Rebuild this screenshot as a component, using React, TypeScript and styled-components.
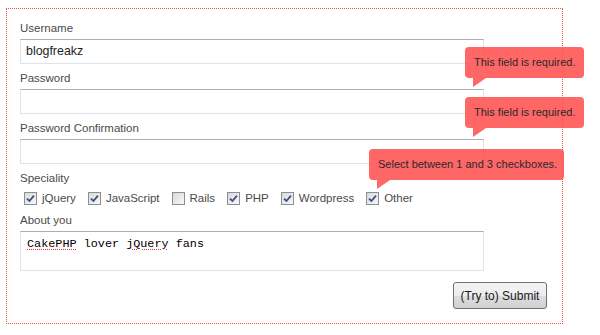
import React from "react"
import styled, { createGlobalStyle } from "styled-components"

const GlobalStyle = createGlobalStyle`
  html, body {
    margin: 0;
    padding: 0;
    background: #ffffff;
  }
  body {
    font-family: "Liberation Sans", Arial, sans-serif;
  }
`

const Page = styled.div`
  width: 600px;
  height: 335px;
  padding: 8px 0 0 6px;
  box-sizing: border-box;
`

const Form = styled.form`
  position: relative;
  width: 557px;
  box-sizing: border-box;
  border: 1px dotted #e8553f;
  padding: 11px 15px 14px 13px;
  display: flex;
  flex-direction: column;
`

const Field = styled.div<{ gap?: number }>`
  display: flex;
  flex-direction: column;
  margin-bottom: ${({ gap }) => (gap ?? 6)}px;
`

const Label = styled.label`
  display: block;
  font-size: 11.5px;
  line-height: 16px;
  color: #4a4a4a;
  margin-bottom: 3px;
`

const TextInput = styled.div`
  width: 464px;
  height: 25px;
  box-sizing: border-box;
  border: 1px solid #dde3ea;
  border-top-color: #aeaeae;
  padding: 0 5px;
  font-size: 12.4px;
  line-height: 23px;
  color: #1e1e1e;
`

const TextArea = styled(TextInput)`
  height: 40px;
  padding: 5px 6px;
  font-family: "Liberation Mono", "Courier New", monospace;
  font-size: 11.8px;
  line-height: 14px;
  color: #000;
`

const Misspelled = styled.span`
  text-decoration: underline dotted #e03030;
  text-underline-offset: 2px;
`

const CheckRow = styled.div`
  display: flex;
  align-items: center;
  height: 18px;
  padding-left: 4px;
`

const CheckItem = styled.span`
  display: flex;
  align-items: center;
  margin-right: 12px;
  font-size: 11.5px;
  color: #4a4a4a;
`

const Box = styled.span`
  width: 13px;
  height: 13px;
  box-sizing: border-box;
  border: 1px solid #8c8e90;
  background: linear-gradient(135deg, #d8d9db, #f8f8f8);
  margin-right: 5px;
  display: flex;
  align-items: center;
  justify-content: center;
`

const ButtonRow = styled.div`
  display: flex;
  justify-content: flex-end;
  margin-top: 11px;
`

const Button = styled.button`
  width: 94px;
  height: 27px;
  border: 1px solid #707070;
  border-radius: 3px;
  background: linear-gradient(#f4f4f4, #ececec 50%, #dedede 51%, #d0d0d0);
  font-family: "Liberation Sans", Arial, sans-serif;
  font-size: 12px;
  color: #1a1a1a;
  padding: 0;
`

const Tip = styled.div<{ left: number; top: number; width: number }>`
  position: absolute;
  left: ${({ left }) => left}px;
  top: ${({ top }) => top}px;
  width: ${({ width }) => width}px;
  height: 31px;
  box-sizing: border-box;
  padding-left: 9px;
  border-radius: 4px;
  background: rgba(255, 85, 85, 0.9);
  color: #2a2a2a;
  font-size: 11px;
  line-height: 31px;
  white-space: nowrap;

  &::after {
    content: "";
    position: absolute;
    left: 8px;
    top: 31px;
    border-top: 9px solid rgba(255, 85, 85, 0.9);
    border-right: 13px solid transparent;
  }
`

const Check = ({ checked, label }: { checked: boolean; label: string }) => (
  <CheckItem>
    <Box>
      {checked && (
        <svg width="9" height="9" viewBox="0 0 9 9">
          <path d="M1 4.6 L3.4 7 L8 1.6" fill="none" stroke="#3d4f86" strokeWidth="1.8" />
        </svg>
      )}
    </Box>
    {label}
  </CheckItem>
)

const specialities = [
  { label: "jQuery", checked: true },
  { label: "JavaScript", checked: true },
  { label: "Rails", checked: false },
  { label: "PHP", checked: true },
  { label: "Wordpress", checked: true },
  { label: "Other", checked: true },
]

export default function App() {
  return (
    <Page>
      <GlobalStyle />
      <Form>
        <Field>
          <Label>Username</Label>
          <TextInput>blogfreakz</TextInput>
        </Field>
        <Field>
          <Label>Password</Label>
          <TextInput />
        </Field>
        <Field>
          <Label>Password Confirmation</Label>
          <TextInput />
        </Field>
        <Field gap={5}>
          <Label>Speciality</Label>
          <CheckRow>
            {specialities.map((s) => (
              <Check key={s.label} label={s.label} checked={s.checked} />
            ))}
          </CheckRow>
        </Field>
        <Field gap={0}>
          <Label>About you</Label>
          <TextArea>
            <Misspelled>CakePHP</Misspelled> lover <Misspelled>jQuery</Misspelled> fans
          </TextArea>
        </Field>
        <ButtonRow>
          <Button type="button">(Try to) Submit</Button>
        </ButtonRow>

        <Tip left={458} top={38} width={119}>This field is required.</Tip>
        <Tip left={458} top={88} width={119}>This field is required.</Tip>
        <Tip left={362} top={140} width={195}>Select between 1 and 3 checkboxes.</Tip>
      </Form>
    </Page>
  )
}
